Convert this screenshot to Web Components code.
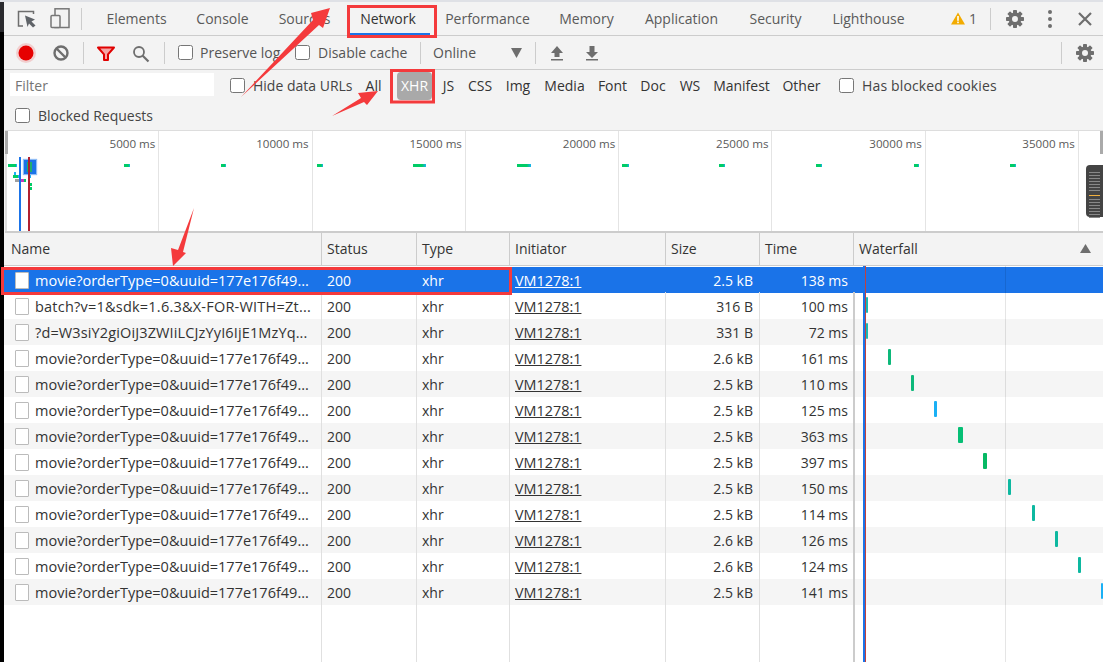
<!DOCTYPE html>
<html><head><meta charset="utf-8">
<style>
html,body{margin:0;padding:0;width:1103px;height:662px;overflow:hidden;background:#000;font-family:"Open Sans","Noto Sans",sans-serif;font-size:14px;color:#333}
</style></head><body>
<dt-app></dt-app>
<script>
const UI='"Open Sans","Noto Sans",sans-serif';
const ICONS={
inspect:'<path d="M18.500 7V4.500H3.500V19H8" fill="none" stroke="#6e6e6e" stroke-width="1.500"/><path d="M10 8.500L20 12.500 16.500 14.500 20.500 18.500 18 20.500 14 16.500 12.500 20z" fill="#5f6368"/>',
device:'<rect x="6" y=".8" width="14" height="18.700" fill="none" stroke="#777" stroke-width="1.500"/><rect x="2" y="7.500" width="9" height="12" rx="1" fill="#f3f3f3" stroke="#777" stroke-width="1.500"/>',
record:'<circle cx="11" cy="11" r="10" fill="#e00" opacity=".15"/><circle cx="11" cy="11" r="7.500" fill="#e60000"/>',
clear:'<circle cx="11" cy="11" r="6.500" fill="none" stroke="#6e6e6e" stroke-width="2.400"/><path d="M6.500 6.500l9 9" stroke="#6e6e6e" stroke-width="2.400"/>',
filter:'<path d="M2 4.500h16l-6 6.800v5.700H8v-5.700z" fill="#f6a5a5" stroke="#e00000" stroke-width="2" stroke-linejoin="round"/>',
search:'<circle cx="9" cy="9" r="5" fill="none" stroke="#6e6e6e" stroke-width="1.800"/><path d="M12.500 12.500l6 6" stroke="#6e6e6e" stroke-width="2.200"/>',
up:'<path d="M9 2l6 7h-3.500v4h-5V9H3z" fill="#6e6e6e"/><rect x="3" y="15" width="12" height="1.500" fill="#6e6e6e"/>',
down:'<path d="M6.500 2h5v6H15l-6 6-6-6h3.500z" fill="#6e6e6e"/><rect x="3" y="15" width="12" height="1.500" fill="#6e6e6e"/>',
gear:'<g fill="#6e6e6e"><circle cx="10" cy="10" r="6.500"/><rect x="8" y="1" width="4" height="18" rx=".8"/><rect x="8" y="1" width="4" height="18" rx=".8" transform="rotate(45 10 10)"/><rect x="8" y="1" width="4" height="18" rx=".8" transform="rotate(90 10 10)"/><rect x="8" y="1" width="4" height="18" rx=".8" transform="rotate(135 10 10)"/></g><circle cx="10" cy="10" r="3" fill="#f3f3f3"/>',
dots:'<circle cx="5" cy="3" r="2" fill="#6e6e6e"/><circle cx="5" cy="10" r="2" fill="#6e6e6e"/><circle cx="5" cy="17" r="2" fill="#6e6e6e"/>',
close:'<path d="M3 3l12 12M15 3L3 15" stroke="#6e6e6e" stroke-width="2.200"/>',
warn:'<path d="M7 .5L14 12.500H0z" fill="#f2ab00"/><rect x="6.200" y="4" width="1.600" height="4.800" fill="#fff"/><rect x="6.200" y="9.600" width="1.600" height="1.600" fill="#fff"/>',
tri:'<path d="M0 0h11L5.500 10z" fill="#6e6e6e"/>'
};
class DtIcon extends HTMLElement{
  connectedCallback(){
    const n=this.getAttribute('name'),w=+this.getAttribute('w')||20,h=+this.getAttribute('h')||w;
    const r=this.shadowRoot||this.attachShadow({mode:'open'});
    r.innerHTML=`<style>:host{display:block;flex:none;width:${w}px;height:${h}px}svg{display:block}</style><svg width="${w}" height="${h}" viewBox="0 0 ${w} ${h}">${ICONS[n]}</svg>`;
  }
}
customElements.define('dt-icon',DtIcon);
class DtSep extends HTMLElement{
  constructor(){super();this.attachShadow({mode:'open'}).innerHTML='<style>:host{display:block;flex:none;width:1px;height:22px;background:#ccc}</style>';}
}
customElements.define('dt-sep',DtSep);
class DtCheck extends HTMLElement{
  constructor(){super();this.attachShadow({mode:'open'}).innerHTML=`<style>
  :host{display:flex;align-items:center;flex:none;color:#555}
  i{display:block;box-sizing:border-box;width:15px;height:15px;border:1px solid #767676;border-radius:2.500px;background:#fff;margin-right:8px;flex:none}
  </style><i></i><slot></slot>`;}
}
customElements.define('dt-check',DtCheck);
class DtTabbar extends HTMLElement{
  constructor(){super();
    const tabs=[['Elements',59],['Console',53],['Sources',51],['Network',56],['Performance',83],['Memory',55],['Application',75],['Security',53],['Lighthouse',73]];
    this.attachShadow({mode:'open'}).innerHTML=`<style>
    :host{display:flex;align-items:center;height:33px;border-bottom:1px solid #ccc;background:#f3f3f3;box-sizing:content-box;color:#5a5a5a}
    .tab{flex:none;display:flex;height:100%;align-items:center;justify-content:center;white-space:nowrap;padding:0 15px;box-sizing:content-box;position:relative}
    .tab.on{color:#333}
    .tab.on::after{content:"";position:absolute;left:5px;right:1px;bottom:-1px;height:3px;background:#1a73e8}
    .right{margin-left:auto;display:flex;align-items:center}
    </style>
    <dt-icon name="inspect" w="24" style="margin-left:11px"></dt-icon>
    <dt-icon name="device" w="22" style="margin-left:10px"></dt-icon>
    <dt-sep style="margin-left:10px;margin-right:7px"></dt-sep>
    ${tabs.map(([t,w],i)=>`<div class="tab${t=='Network'?' on':''}" style="width:${w}px${i==0?';margin-left:3px':''}">${t}</div>`).join('')}
    <div class="right">
      <dt-icon name="warn" w="14" h="13" style="margin-right:4px"></dt-icon><span>1</span>
      <dt-sep style="margin:0 14px 0 13px"></dt-sep>
      <dt-icon name="gear" w="20"></dt-icon>
      <dt-icon name="dots" w="10" h="20" style="margin-left:20px"></dt-icon>
      <dt-icon name="close" w="18" style="margin-left:21px;margin-right:9px"></dt-icon>
    </div>`;
  }
}
customElements.define('dt-tabbar',DtTabbar);
class DtToolbar extends HTMLElement{
  constructor(){super();
    this.attachShadow({mode:'open'}).innerHTML=`<style>
    :host{display:flex;align-items:center;height:33px;border-bottom:1px solid #ccc;background:#f3f3f3}
    .online{flex:none;width:44px;color:#555}
    .right{margin-left:auto;display:flex;align-items:center}
    </style>
    <dt-icon name="record" w="22" style="margin-left:11px"></dt-icon>
    <dt-icon name="clear" w="22" style="margin-left:13px"></dt-icon>
    <dt-sep style="margin-left:11px"></dt-sep>
    <dt-icon name="filter" w="20" style="margin-left:12px"></dt-icon>
    <dt-icon name="search" w="20" style="margin-left:14px"></dt-icon>
    <dt-sep style="margin-left:14px"></dt-sep>
    <dt-check style="margin-left:13px;width:117px"><span style="margin-left:-1px">Preserve log</span></dt-check>
    <dt-check style="width:125px">Disable cache</dt-check>
    <dt-sep></dt-sep>
    <div class="online" style="margin-left:12px">Online</div>
    <dt-icon name="tri" w="11" h="10" style="margin-left:34px"></dt-icon>
    <dt-sep style="margin-left:13px"></dt-sep>
    <dt-icon name="up" w="18" style="margin-left:12px"></dt-icon>
    <dt-icon name="down" w="18" style="margin-left:17px"></dt-icon>
    <div class="right"><dt-sep style="margin-right:13px"></dt-sep><dt-icon name="gear" w="20" style="margin-right:8px"></dt-icon></div>`;
  }
}
customElements.define('dt-toolbar',DtToolbar);
class DtFilterbar extends HTMLElement{
  constructor(){super();
    const f=[['All',17,12],['XHR',35,15],['JS',13,10],['CSS',26,12],['Img',26,12],['Media',41,13],['Font',29,13],['Doc',26,13],['WS',24,12],['Manifest',57,11],['Other',37,13]];
    this.attachShadow({mode:'open'}).innerHTML=`<style>
    :host{display:flex;flex-direction:column;height:60px;background:#f3f3f3;box-sizing:border-box;color:#333}
    .l1{display:flex;align-items:center;height:32px;box-sizing:border-box}
    .input{flex:none;box-sizing:border-box;width:204px;height:23px;background:#fff;margin:0 0 3px 6px;padding-left:5px;line-height:26px;color:#757575;overflow:hidden}
    .f{flex:none;white-space:nowrap;display:flex;align-items:center;justify-content:center;height:28px;box-sizing:border-box;padding-bottom:2px}
    .f.on{background:#a9a9a9;color:#fff;border-radius:4px}
    .l2{display:flex;align-items:center;height:26px;padding-left:11px;box-sizing:content-box}
    dt-check{color:#444}
    .l1 dt-check{margin-bottom:2px}
    </style>
    <div class="l1">
      <div class="input">Filter</div>
      <dt-check style="margin-left:16px;width:123px">Hide data URLs</dt-check>
      ${f.map(([t,w,m])=>`<div class="f${t=='XHR'?' on':''}" style="width:${w}px;margin-left:${m}px">${t}</div>`).join('')}
      <dt-check style="margin-left:19px;letter-spacing:.15px">Has blocked cookies</dt-check>
    </div>
    <div class="l2"><dt-check>Blocked Requests</dt-check></div>`;
  }
}
customElements.define('dt-filterbar',DtFilterbar);
class DtOverview extends HTMLElement{
  constructor(){super();
    const ticks=['5000','10000','15000','20000','25000','30000','35000'];
    const bars=[[124,6],[221,5],[317,6],[413,13],[517,14],[622,7],[719,6],[816,6],[914,5],[1010,6]];
    const small=[[8,8,165,'#0c6'],[16,1,165,'#1ab0f5'],[14,2,173,'#1ab0f5'],[13,5,176,'#0c6'],[18,2,176,'#1ab0f5'],[15,4,180,'#a0a0a0'],[19,5,180,'#c03cc0'],[24,2,180,'#0c6'],[28,3,176,'#1ab0f5'],[29,3,184,'#0c6'],[30,2,188,'#0c6']];
    this.attachShadow({mode:'open'}).innerHTML=`<style>
    :host{display:block;position:relative;height:100px;background:#fff;box-sizing:content-box;border-top:1px solid #ddd;border-bottom:2px solid #ccc;overflow:hidden}
    .grid{display:grid;grid-template-columns:repeat(6,153.300px) 153px 1fr;height:100%;margin-left:1px}
    .cell{border-right:1px solid #e4e4e4;box-sizing:border-box;text-align:right;padding:5px 3px 0 0;font-size:11.600px;color:#5a5a5a;line-height:16px}
    .cell:last-child{border:0}
    .b{position:absolute;height:3px}
    .b.main{top:33px;background:linear-gradient(90deg,#0c6 70%,#1ab0f5)}
    .ln{position:absolute;top:26px;bottom:0;width:2px}
    .thumb{position:absolute;top:0;width:3px;height:23px;background:#aaa}
    .side{position:absolute;left:0;top:0;bottom:0;width:2px;background:#ddd}
    .zoom{position:absolute;left:1081px;top:34px;width:17px;height:52px;background:#444;border-radius:4px 0 0 4px;box-sizing:border-box;padding:7px 3px}
    .zoom i{display:block;height:20px;margin-bottom:6px;background:repeating-linear-gradient(#888 0 1px,transparent 1px 3px)}
    .zoom b{display:block;height:1px;background:#f0b040;margin:-3px 0 3px}
    .sel{position:absolute;left:19px;top:29px;width:12px;height:14px;background:#1a73e8;box-shadow:0 0 1px 1px #8fbcf5}
    .sel u{position:absolute;left:3px;top:2px;width:5px;height:10px;background:#1fae6e}
    </style>
    <div class="grid">${ticks.map(t=>`<div class="cell">${t} ms</div>`).join('')}<div class="cell"></div></div>
    <div class="side"></div><div class="thumb" style="left:0"></div><div class="thumb" style="right:0"></div>
    ${bars.map(([x,w])=>`<div class="b main" style="left:${x-5}px;width:${w}px"></div>`).join('')}
    ${small.map(([x,w,y,c])=>`<div class="b" style="left:${x-5}px;width:${w}px;top:${y-132}px;background:${c}"></div>`).join('')}
    <div class="sel"><u></u></div>
    <div class="ln" style="left:14px;background:#1a73e8"></div><div class="ln" style="left:23px;background:#b02030"></div>
    <div class="zoom"><i></i><b></b><i></i></div>`;
  }
}
customElements.define('dt-overview',DtOverview);
const COLS='318px 95px 93px 156px 94px 94px 1fr';
class DtRow extends HTMLElement{
  constructor(){super();
    this.attachShadow({mode:'open'}).innerHTML=`<style>
    :host{display:grid;grid-template-columns:${COLS};height:26px;line-height:26px;color:#333;background:#fff;position:relative}
    :host([alt]){background:#f5f5f5}
    :host([selected]){background:#1a73e8;color:#fff}
    .c{box-sizing:border-box;border-right:1px solid #e0e0e0;padding:1px 5px 0;white-space:nowrap;overflow:hidden}
    :host([selected]) .c{border-right-color:transparent}
    :host([selected]) .c:first-child{border-right-color:#fff}
    .n{display:flex;align-items:flex-start;padding-left:11px;font-size:14.500px;letter-spacing:var(--ls,0)}
    .n i{display:block;box-sizing:border-box;width:14px;height:17px;background:#fff;border:1px solid #bbb;border-radius:1px;margin:4px 6px 0 0;flex:none}
    .r{text-align:right}
    .s{padding-right:6px}
    .i{text-decoration:underline;font-size:14.400px}
    .w{position:relative;border:0;padding:0}
    .bar{position:absolute;top:4px;height:16px;width:var(--bw);left:var(--bx);border-radius:1px;background:var(--bc);filter:blur(.3px)}
    </style>
    <div class="c n"><i></i><slot></slot></div>
    <div class="c"><slot name="status"></slot></div>
    <div class="c"><slot name="type"></slot></div>
    <div class="c i"><slot name="init"></slot></div>
    <div class="c r s"><slot name="size"></slot></div>
    <div class="c r"><slot name="time"></slot></div>
    <div class="c w"><div class="bar"></div></div>`;
  }
}
customElements.define('dt-row',DtRow);
class DtTable extends HTMLElement{
  constructor(){super();
    const M='movie?orderType=0&amp;uuid=177e176f49...';
    const d=[[M,'2.5 kB','138 ms',865,1,'#4fc3d0'],['batch?v=1&amp;sdk=1.6.3&amp;X-FOR-WITH=Zt...','316 B','100 ms',866,2,'#17b8b0','.22px'],['?d=W3siY2giOiJ3ZWIiLCJzYyI6IjE1MzYq...','331 B','72 ms',866,2,'#17b8b0','.13px'],
    [M,'2.6 kB','161 ms',888,3,'#0db87a'],[M,'2.5 kB','110 ms',911,3,'#0db87a'],[M,'2.5 kB','125 ms',934,3,'#1ab0f5'],[M,'2.5 kB','363 ms',958,5,'#06bf75'],[M,'2.5 kB','397 ms',983,4,'#06b964'],[M,'2.5 kB','150 ms',1008,3,'#0db8a0'],[M,'2.5 kB','114 ms',1032,3,'#0db8a0'],[M,'2.6 kB','126 ms',1055,3,'#0db8a0'],[M,'2.6 kB','124 ms',1078,3,'#0db8a0'],[M,'2.5 kB','141 ms',1101,2,'#1ab0f5']];
    this.attachShadow({mode:'open'}).innerHTML=`<style>
    :host{display:block;flex:1;position:relative;background:#fff;overflow:hidden;font-size:14px}
    .h{display:grid;grid-template-columns:${COLS};height:32px;background:#f3f3f3;border-bottom:1px solid #ccc;line-height:32px;color:#333;margin-bottom:1px}
    .h div{border-right:1px solid #ccc;padding-left:5px;box-sizing:border-box;position:relative}
    .h div:last-child{border:0}
    .h svg{position:absolute;right:12px;top:11px}
    .ln{position:absolute;top:33px;bottom:0;width:1px}
    .g{position:absolute;top:59px;bottom:0;width:1px;background:#e0e0e0}
    </style>
    <div class="h"><div style="padding-left:7px">Name</div><div>Status</div><div>Type</div><div>Initiator</div><div>Size</div><div>Time</div><div>Waterfall<svg width="11" height="9"><path d="M0 9L5.500 0 11 9z" fill="#6e6e6e"/></svg></div></div>
    ${d.map((r,i)=>`<dt-row ${i==0?'selected':''} ${i%2==0&&i>0?'alt':''} style="--bx:${r[3]-854}px;--bw:${r[4]}px;--bc:${r[5]}${r[6]?';--ls:'+r[6]:''}"><span>${r[0]}</span><span slot="status">200</span><span slot="type">xhr</span><span slot="init">VM1278:1</span><span slot="size">${r[1]}</span><span slot="time">${r[2]}</span></dt-row>`).join('')}
    <div class="g" style="left:317px"></div><div class="g" style="left:412px"></div><div class="g" style="left:505px"></div><div class="g" style="left:661px"></div><div class="g" style="left:755px"></div>
    <div class="g" style="left:849px;width:1.500px;background:#ccc"></div>
    <div class="g" style="left:1001px;top:33px;background:rgba(0,0,0,.1)"></div>
    <div class="ln" style="left:859px;width:2px;background:#1a73e8"></div>
    <div class="ln" style="left:861px;background:#c04040"></div>`;
  }
}
customElements.define('dt-table',DtTable);
class DtMarks extends HTMLElement{
  constructor(){super();
    this.attachShadow({mode:'open'}).innerHTML=`<style>
    :host{display:block;position:absolute;inset:0;pointer-events:none}
    svg{display:block}
    </style>
    <svg width="1103" height="662" viewBox="0 0 1103 662">
      <g fill="none" stroke="#f43a3c" stroke-width="3">
        <rect x="348.500" y="6.500" width="87" height="30"/>
        <rect x="391.500" y="70.500" width="42" height="31.500"/>
        <rect x="2.500" y="268.500" width="508" height="25"/>
      </g>
      <g fill="#f43a3c">
        <polygon points="241,97 313,20 311,13 330,8 323,28 319,25"/>
        <polygon points="332,116 361,98 358,93 378,91 367,105 364,102"/>
        <polygon points="194,208 178,250 171,248 173,266 186,253 183,252"/>
      </g>
    </svg>`;
  }
}
customElements.define('dt-marks',DtMarks);
class DtApp extends HTMLElement{
  constructor(){super();
    this.attachShadow({mode:'open'}).innerHTML=`<style>
    :host{display:block;position:relative;width:1103px;height:662px;font-family:${UI};font-size:14px;background:#000;overflow:hidden}
    .top{height:2px;background:#dfe1e6}
    .wrap{display:flex;height:660px}
    .edge{flex:none;width:4px;background:linear-gradient(#2a2a2e 0 30px,#000 30px)}
    .main{flex:1;min-width:0;display:flex;flex-direction:column;background:#f3f3f3}
    dt-overview{margin-left:1px}
    </style>
    <div class="top"></div>
    <div class="wrap"><div class="edge"></div><div class="main">
      <dt-tabbar></dt-tabbar><dt-toolbar></dt-toolbar><dt-filterbar></dt-filterbar><dt-overview></dt-overview><dt-table></dt-table>
    </div></div>
    <dt-marks></dt-marks>`;
  }
}
customElements.define('dt-app',DtApp);
</script>
</body></html>
